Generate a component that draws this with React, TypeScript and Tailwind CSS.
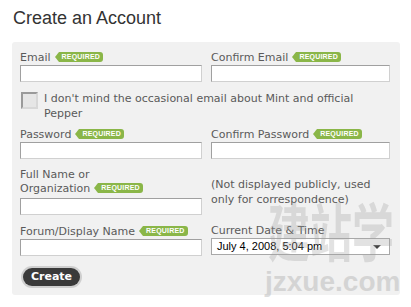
function Required() {
  return (
    <span className="inline-flex items-center align-middle ml-[4px] -mt-[2px]">
      <span className="w-0 h-0 border-y-[5px] border-y-transparent border-r-[4px] border-r-[#8ab648]" />
      <span className="h-[10px] leading-[10px] px-[3px] rounded-r-[3px] bg-[#8ab648] text-white font-bold text-[7px] font-['Liberation_Sans',Arial,sans-serif] tracking-[0.2px]">
        REQUIRED
      </span>
    </span>
  );
}

function TextInput() {
  return (
    <input
      type="text"
      className="block w-full h-[17px] bg-white border border-[#a0a0a0] border-r-[#d0d0d0] border-b-[#d0d0d0] outline-none"
    />
  );
}

function Field({ label, required }: { label: string; required?: boolean }) {
  return (
    <div>
      <div className="h-[15px] leading-[15px] whitespace-nowrap">
        {label}
        {required && <Required />}
      </div>
      <TextInput />
    </div>
  );
}

export default function App() {
  return (
    <div className="relative w-[411px] h-[307px] bg-white overflow-hidden">
      <h1 className="pl-[13px] pt-[6px] h-[42px] text-[18px] leading-[24px] text-[#333] font-['Liberation_Sans',Arial,sans-serif]">
        Create an Account
      </h1>

      <div className="ml-[12px] w-[388px] h-[253px] bg-[#f1f1f1] rounded-[3px] pl-[8px] pt-[8px] text-[11px] text-[#5a5a5a] font-['DejaVu_Sans',Verdana,sans-serif]">
        <div className="grid grid-cols-[182px_179px] gap-x-[9px]">
          <Field label="Email" required />
          <Field label="Confirm Email" required />
        </div>

        <div className="flex mt-[9px] ml-[1px]">
          <div className="mt-[1px] w-[17px] h-[17px] shrink-0 bg-[#e6e6e6] border-2 border-[#9a9a9a] border-r-[#d8d8d8] border-b-[#d8d8d8]" />
          <p className="ml-[6px] leading-[15px] whitespace-nowrap">
            I don't mind the occasional email about Mint and official
            <br />
            Pepper
          </p>
        </div>

        <div className="grid grid-cols-[182px_179px] gap-x-[9px] mt-[6px]">
          <Field label="Password" required />
          <Field label="Confirm Password" required />
        </div>

        <div className="grid grid-cols-[182px_179px] gap-x-[9px] mt-[9px] items-center">
          <div>
            <div className="leading-[14px]">Full Name or</div>
            <div className="h-[14px] leading-[14px] whitespace-nowrap">
              Organization
              <Required />
            </div>
            <div className="mt-[2px]">
              <TextInput />
            </div>
          </div>
          <div className="leading-[15px] whitespace-nowrap">
            (Not displayed publicly, used
            <br />
            only for correspondence)
          </div>
        </div>

        <div className="grid grid-cols-[182px_179px] gap-x-[9px] mt-[9px]">
          <Field label="Forum/Display Name" required />
          <div>
            <div className="h-[14px] leading-[14px]">Current Date &amp; Time</div>
            <div className="flex items-center justify-between h-[17px] bg-white border border-[#a8a8a8] pl-[5px] pr-[8px] text-[11px] text-black font-['Liberation_Sans',Arial,sans-serif]">
              <span>July 4, 2008, 5:04 pm</span>
              <span className="w-0 h-0 border-x-[4px] border-x-transparent border-t-[4px] border-t-[#444]" />
            </div>
          </div>
        </div>

        <button className="mt-[12px] ml-[3px] w-[57px] h-[18px] rounded-full bg-[#3a3a3a] ring-2 ring-[#cfcfcf] text-white text-[11px] font-bold leading-[18px] font-['DejaVu_Sans',Verdana,sans-serif]">
          Create
        </button>
      </div>

      <div className="absolute left-[268px] top-[207px] text-[42px] leading-[44px] font-bold whitespace-nowrap text-[#a0a0a0] opacity-30 scale-y-150 font-['Noto_Sans_CJK_SC',sans-serif] pointer-events-none">
        建站学
      </div>
      <div className="absolute left-[265px] top-[266px] text-[28px] leading-[32px] font-bold whitespace-nowrap text-[#a0a0a0] opacity-35 font-['Liberation_Sans',Arial,sans-serif] pointer-events-none">
        jzxue.com
      </div>
    </div>
  );
}
